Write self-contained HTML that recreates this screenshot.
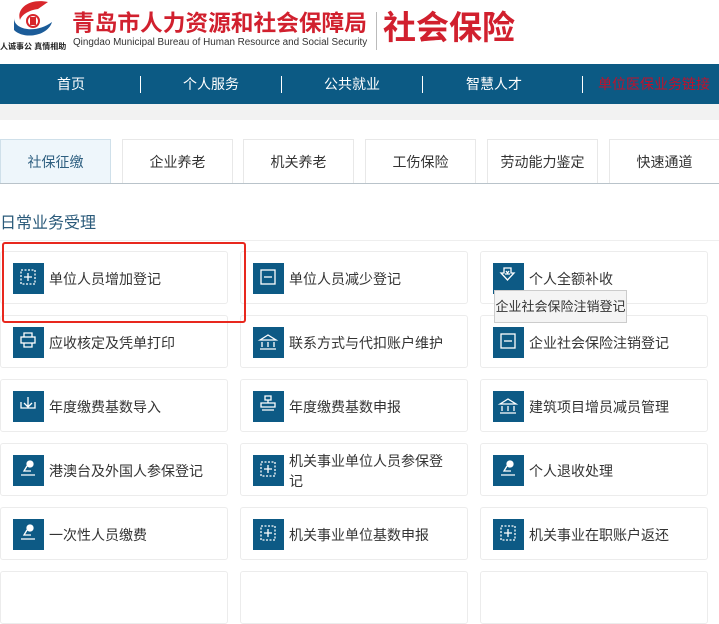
<!DOCTYPE html>
<html><head><meta charset="utf-8"><style>
*{margin:0;padding:0;box-sizing:border-box}
body{width:719px;height:580px;overflow:hidden;background:#fff;font-family:"Liberation Sans","Noto Sans CJK SC",sans-serif;position:relative}
.abs{position:absolute}
.nav{top:64px;left:0;width:719px;height:40px;background:#0c5a84}
.nav span{position:absolute;top:0;line-height:40px;color:#fff;font-size:14px}
.nav i{position:absolute;top:12px;width:1px;height:17px;background:#fff}
.band{top:104px;left:0;width:719px;height:16px;background:#f2f2f2}
.tab{position:absolute;top:139px;height:45px;width:111px;border:1px solid #e8e8e8;border-bottom:none;text-align:center;line-height:45px;font-size:14px;color:#333;background:#fff}
.card{position:absolute;width:228px;height:53px;border:1px solid #ececec;border-radius:3px;background:#fff}
.card .ic{position:absolute;left:12px;top:11px;width:31px;height:31px;background:#0d5a85}
.card .t{position:absolute;left:48px;top:0;width:160px;height:53px;display:flex;align-items:center;font-size:14px;color:#333;line-height:20px}
</style></head><body>
<svg class="abs" style="left:8px;top:0" width="48" height="40" viewBox="0 0 48 40">
<path d="M40 2 C22 -2 8 8 12 20 C14 14 22 10 30 9 Z" fill="#d8262b"/>
<path d="M6 18 C6 30 28 34 44 22 C40 36 16 40 6 30 Z" fill="#1c5c99"/>
<circle cx="25" cy="21" r="6" fill="none" stroke="#d8262b" stroke-width="2"/>
<rect x="22" y="17" width="6" height="8" fill="#d8262b"/>
</svg>
<div class="abs" style="left:0;top:41px;font-size:8px;color:#222;font-weight:bold;white-space:nowrap">人诚事公 真情相助</div>
<div class="abs" style="left:72px;top:9px;font-size:22.7px;font-weight:bold;color:#d1202e;white-space:nowrap;line-height:28px">青岛市人力资源和社会保障局</div>
<div class="abs" style="left:73px;top:37px;font-size:9.9px;color:#333;white-space:nowrap">Qingdao Municipal Bureau of Human Resource and Social Security</div>
<div class="abs" style="left:376px;top:12px;width:1px;height:38px;background:#bbb"></div>
<div class="abs" style="left:383px;top:9px;font-size:33px;font-weight:bold;color:#d1202e;white-space:nowrap;line-height:38px">社会保险</div>
<div class="abs nav">
<span style="left:57px">首页</span><i style="left:140px"></i>
<span style="left:183px">个人服务</span><i style="left:281px"></i>
<span style="left:324px">公共就业</span><i style="left:422px"></i>
<span style="left:466px">智慧人才</span><i style="left:582px"></i>
<span style="left:598px;color:#c2102a">单位医保业务链接</span>
</div>
<div class="abs band"></div>
<div class="tab" style="left:0;background:#eef6fb;border-color:#cfe0ea;color:#2e5f80">社保征缴</div>
<div class="tab" style="left:122px">企业养老</div>
<div class="tab" style="left:243px">机关养老</div>
<div class="tab" style="left:365px">工伤保险</div>
<div class="tab" style="left:487px">劳动能力鉴定</div>
<div class="tab" style="left:609px">快速通道</div>
<div class="abs" style="left:0;top:183px;width:719px;height:1px;background:#b9c3ca"></div>
<div class="abs" style="left:0;top:209px;font-size:16px;color:#2a5a7a">日常业务受理</div>
<div class="abs" style="left:0;top:240px;width:719px;height:1px;background:#eee"></div>

<div class="card" style="left:0;top:251px"><div class="ic"></div><div class="t">单位人员增加登记</div></div>
<div class="card" style="left:240px;top:251px"><div class="ic"></div><div class="t">单位人员减少登记</div></div>
<div class="card" style="left:480px;top:251px"><div class="ic"></div><div class="t">个人全额补收</div></div>
<div class="card" style="left:0;top:315px"><div class="ic"></div><div class="t">应收核定及凭单打印</div></div>
<div class="card" style="left:240px;top:315px"><div class="ic"></div><div class="t">联系方式与代扣账户维护</div></div>
<div class="card" style="left:480px;top:315px"><div class="ic"></div><div class="t">企业社会保险注销登记</div></div>
<div class="card" style="left:0;top:379px"><div class="ic"></div><div class="t">年度缴费基数导入</div></div>
<div class="card" style="left:240px;top:379px"><div class="ic"></div><div class="t">年度缴费基数申报</div></div>
<div class="card" style="left:480px;top:379px"><div class="ic"></div><div class="t">建筑项目增员减员管理</div></div>
<div class="card" style="left:0;top:443px"><div class="ic"></div><div class="t">港澳台及外国人参保登记</div></div>
<div class="card" style="left:240px;top:443px"><div class="ic"></div><div class="t">机关事业单位人员参保登记</div></div>
<div class="card" style="left:480px;top:443px"><div class="ic"></div><div class="t">个人退收处理</div></div>
<div class="card" style="left:0;top:507px"><div class="ic"></div><div class="t">一次性人员缴费</div></div>
<div class="card" style="left:240px;top:507px"><div class="ic"></div><div class="t">机关事业单位基数申报</div></div>
<div class="card" style="left:480px;top:507px"><div class="ic"></div><div class="t">机关事业在职账户返还</div></div>
<div class="card" style="left:0;top:571px"></div>
<div class="card" style="left:240px;top:571px"></div>
<div class="card" style="left:480px;top:571px"></div>

<svg class="abs" style="left:0;top:0" width="719" height="580" fill="none" stroke="#fff" stroke-width="1.3">
<g><rect x="21" y="270" width="14" height="14" stroke-dasharray="2 1.5"/><path d="M28 273v8M24 277h8"/></g>
<g><rect x="261" y="270" width="14" height="14"/><path d="M264 277h8"/></g>
<g><path d="M504 268h7v5h3l-6.5 7-6.5-7h3z"/><path d="M506 271l1.5 2 1.5-2M505 274h5"/></g>
<g><rect x="21" y="337" width="14" height="6"/><path d="M24 337v-4h8v4M24 343v4h8v-4"/></g>
<g><path d="M260 340l8-5 8 5zM262 342v5M268 342v5M274 342v5M260 349h16"/></g>
<g><rect x="501" y="334" width="14" height="14"/><path d="M504 341h8"/></g>
<g><path d="M28 397v9M24 403l4 4 4-4M21 402v6h14v-6"/></g>
<g><path d="M265 396h6v4h-6zM268 400v3M261 403h14v4h-14zM262 410h12"/></g>
<g><path d="M500 404l8-5 8 5zM502 406v5M508 406v5M514 406v5M500 413h16"/></g>
<g><circle cx="30" cy="464" r="3" fill="#fff"/><path d="M27 466l-3 5h7M21 475h14"/></g>
<g><rect x="261" y="462" width="14" height="14" stroke-dasharray="2 1.5"/><path d="M268 465v8M264 469h8"/></g>
<g><circle cx="510" cy="464" r="3" fill="#fff"/><path d="M507 466l-3 5h7M501 475h14"/></g>
<g><circle cx="30" cy="528" r="3" fill="#fff"/><path d="M27 530l-3 5h7M21 539h14"/></g>
<g><rect x="261" y="526" width="14" height="14" stroke-dasharray="2 1.5"/><path d="M268 529v8M264 533h8"/></g>
<g><rect x="501" y="526" width="14" height="14" stroke-dasharray="2 1.5"/><path d="M508 529v8M504 533h8"/></g>
</svg>

<div class="abs" style="left:494px;top:290px;width:133px;height:33px;background:#f4f4f4;border:1px solid #ccc;font-size:13px;color:#333;line-height:31px;text-align:center;white-space:nowrap">企业社会保险注销登记</div>
<div class="abs" style="left:2px;top:242px;width:244px;height:81px;border:2px solid #e8281e;border-radius:3px"></div>
</body></html>
